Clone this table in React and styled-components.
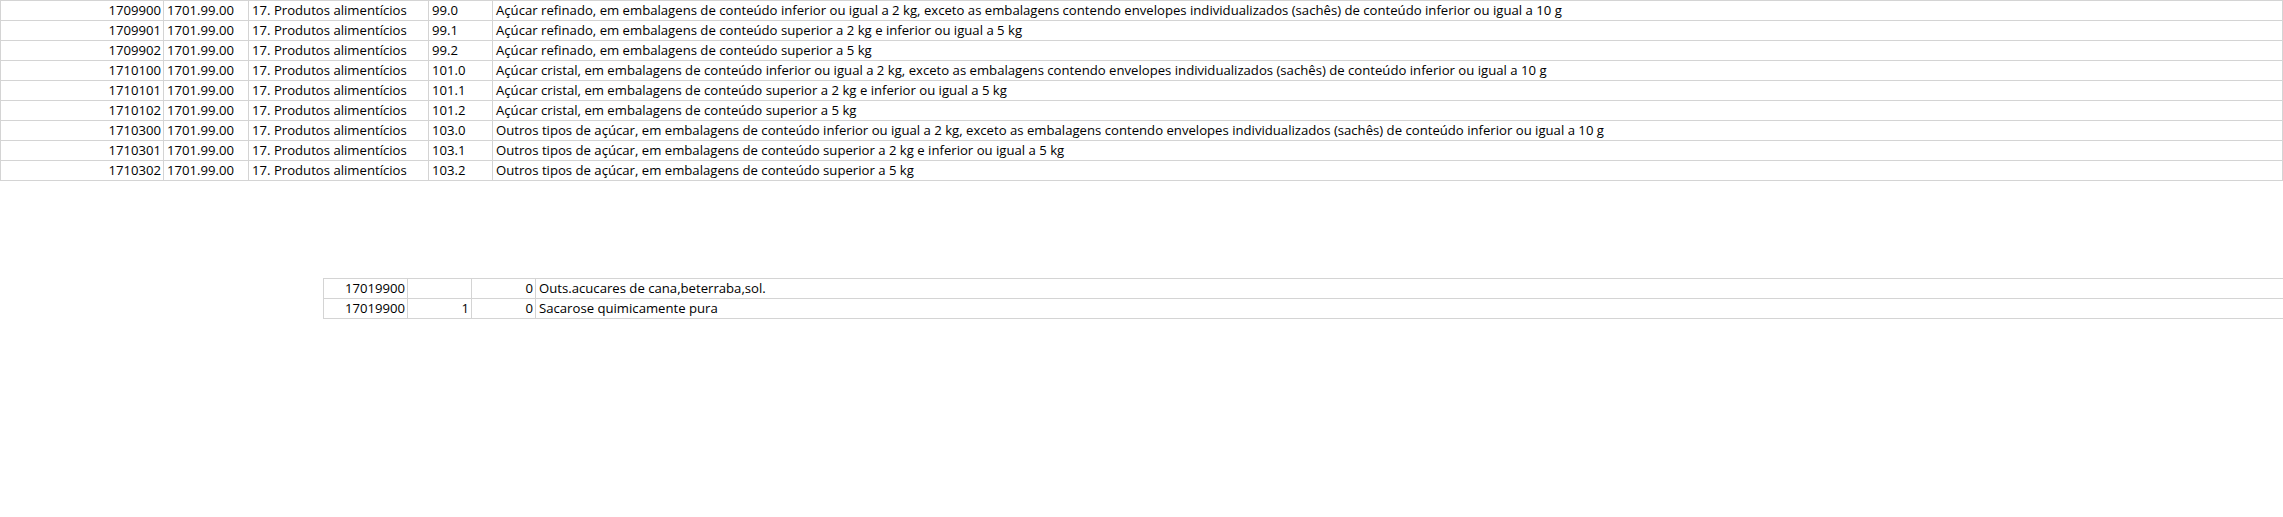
import React from 'react';
import styled, { createGlobalStyle } from 'styled-components';

const GlobalStyle = createGlobalStyle`
  body {
    margin: 0;
    background: #ffffff;
    font-family: "Open Sans", "Liberation Sans", sans-serif;
    color: #000000;
  }
`;

const Page = styled.div`
  display: flex;
  flex-direction: column;
  width: 2283px;
  height: 517px;
  overflow: hidden;
`;

const Sheet = styled.div`
  display: grid;
  grid-template-columns: ${(p) => p.columns};
  grid-auto-rows: 20px;
  border-top: 1px solid #d4d4d4;
  border-left: 1px solid #d4d4d4;
  margin: ${(p) => p.offset || '0'};
`;

const Cell = styled.div`
  box-sizing: border-box;
  border-right: ${(p) => (p.open ? 'none' : '1px solid #d4d4d4')};
  border-bottom: 1px solid #d4d4d4;
  padding: 0 2px 0 3px;
  font-size: 13.15px;
  line-height: 19px;
  white-space: nowrap;
  overflow: hidden;
  text-align: ${(p) => (p.right ? 'right' : 'left')};
`;

const produtos = [
  ['1709900', '99.0', 'Açúcar refinado, em embalagens de conteúdo inferior ou igual a 2 kg, exceto as embalagens contendo envelopes individualizados (sachês) de conteúdo inferior ou igual a 10 g'],
  ['1709901', '99.1', 'Açúcar refinado, em embalagens de conteúdo superior a 2 kg e inferior ou igual a 5 kg'],
  ['1709902', '99.2', 'Açúcar refinado, em embalagens de conteúdo superior a 5 kg'],
  ['1710100', '101.0', 'Açúcar cristal, em embalagens de conteúdo inferior ou igual a 2 kg, exceto as embalagens contendo envelopes individualizados (sachês) de conteúdo inferior ou igual a 10 g'],
  ['1710101', '101.1', 'Açúcar cristal, em embalagens de conteúdo superior a 2 kg e inferior ou igual a 5 kg'],
  ['1710102', '101.2', 'Açúcar cristal, em embalagens de conteúdo superior a 5 kg'],
  ['1710300', '103.0', 'Outros tipos de açúcar, em embalagens de conteúdo inferior ou igual a 2 kg, exceto as embalagens contendo envelopes individualizados (sachês) de conteúdo inferior ou igual a 10 g'],
  ['1710301', '103.1', 'Outros tipos de açúcar, em embalagens de conteúdo superior a 2 kg e inferior ou igual a 5 kg'],
  ['1710302', '103.2', 'Outros tipos de açúcar, em embalagens de conteúdo superior a 5 kg'],
];

const ncm = [
  ['17019900', '', '0', 'Outs.acucares de cana,beterraba,sol.'],
  ['17019900', '1', '0', 'Sacarose quimicamente pura'],
];

export default function App() {
  return (
    <Page>
      <GlobalStyle />
      <Sheet columns="163px 85px 180px 64px 1790px">
        {produtos.map(([cest, item, desc]) => (
          <React.Fragment key={cest}>
            <Cell right>{cest}</Cell>
            <Cell>1701.99.00</Cell>
            <Cell>17. Produtos alimentícios</Cell>
            <Cell>{item}</Cell>
            <Cell>{desc}</Cell>
          </React.Fragment>
        ))}
      </Sheet>
      <Sheet columns="84px 64px 64px 1fr" offset="97px 0 0 323px">
        {ncm.map(([code, ex, aliq, desc], i) => (
          <React.Fragment key={i}>
            <Cell right>{code}</Cell>
            <Cell right>{ex}</Cell>
            <Cell right>{aliq}</Cell>
            <Cell open>{desc}</Cell>
          </React.Fragment>
        ))}
      </Sheet>
    </Page>
  );
}
